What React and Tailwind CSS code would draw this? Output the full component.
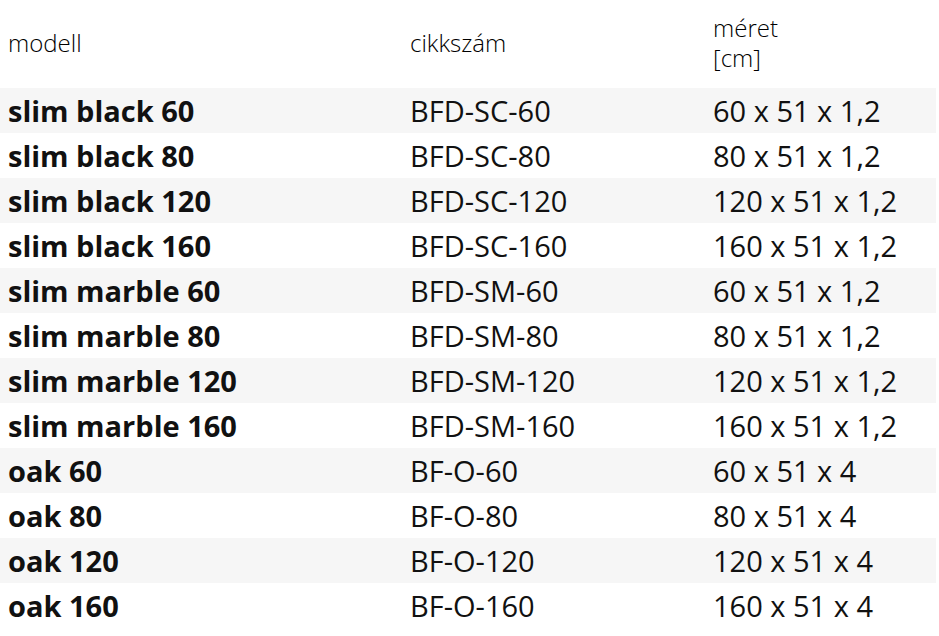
import React from 'react';

const rows = [
  ['slim black 60', 'BFD-SC-60', '60 x 51 x 1,2'],
  ['slim black 80', 'BFD-SC-80', '80 x 51 x 1,2'],
  ['slim black 120', 'BFD-SC-120', '120 x 51 x 1,2'],
  ['slim black 160', 'BFD-SC-160', '160 x 51 x 1,2'],
  ['slim marble 60', 'BFD-SM-60', '60 x 51 x 1,2'],
  ['slim marble 80', 'BFD-SM-80', '80 x 51 x 1,2'],
  ['slim marble 120', 'BFD-SM-120', '120 x 51 x 1,2'],
  ['slim marble 160', 'BFD-SM-160', '160 x 51 x 1,2'],
  ['oak 60', 'BF-O-60', '60 x 51 x 4'],
  ['oak 80', 'BF-O-80', '80 x 51 x 4'],
  ['oak 120', 'BF-O-120', '120 x 51 x 4'],
  ['oak 160', 'BF-O-160', '160 x 51 x 4'],
];

const App = () => {
  return (
    <div className="w-[939px] h-[636px] bg-white overflow-hidden font-['Open_Sans',sans-serif] text-[#111]">
      <div className="w-[936px]">
        {/* Header */}
        <div className="grid grid-cols-[402px_303px_231px] h-[88px] pb-[3px] items-center text-[24px] leading-[30px] font-light text-black">
          <div className="pl-2">modell</div>
          <div className="pl-2">cikkszám</div>
          <div className="pl-2">
            méret
            <br />
            [cm]
          </div>
        </div>

        {/* Rows */}
        {rows.map((r, i) => (
          <div
            key={r[1]}
            className={`grid grid-cols-[402px_303px_231px] h-[45px] items-center text-[29px] leading-[45px] ${
              i % 2 === 0 ? 'bg-[#f6f6f6]' : 'bg-white'
            }`}
          >
            <div className="pl-2 font-bold">{r[0]}</div>
            <div className="pl-2">{r[1]}</div>
            <div className="pl-2">{r[2]}</div>
          </div>
        ))}
      </div>
    </div>
  );
};

export default App;
